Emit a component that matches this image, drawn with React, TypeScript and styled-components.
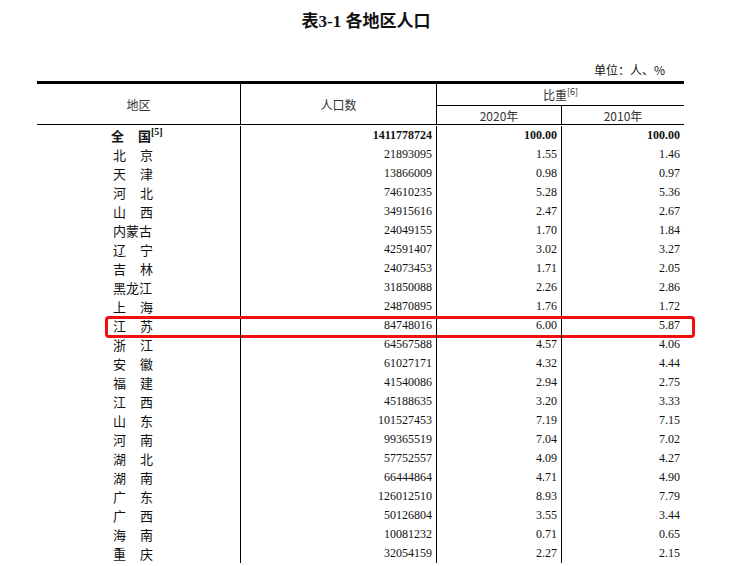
import React from "react";
import styled, { createGlobalStyle } from "styled-components";

const Global = createGlobalStyle`
  body { margin: 0; background: #fff; }
`;

const Page = styled.div`
  width: 732px; height: 566px; overflow: hidden; position: relative;
  font-family: "Liberation Serif", "Noto Sans CJK SC", serif; color: #111;
`;
const Title = styled.div`
  text-align: center; font-weight: bold; font-size: 17px; padding-top: 7px; height: 25px;
  font-family: "Liberation Serif", "Noto Sans CJK SC", serif;
`;
const Unit = styled.div`
  margin-top: 29px; width: 665px; text-align: right; font-size: 12px; height: 20px;
  font-family: "Noto Sans CJK SC", sans-serif;
`;
const Table = styled.div`
  margin-left: 37px; width: 647px; border-top: 3px solid #000;
`;
const cols = "204px 196px 125px 122px";
const Head = styled.div`
  display: grid; grid-template-columns: ${cols}; grid-template-rows: 22px 18px;
  border-bottom: 1px solid #000; font-family: "Noto Sans CJK SC", sans-serif; font-size: 12px; color: #333;
`;
const HCell = styled.div<{ $area: string; $right?: boolean; $bottom?: boolean }>`
  grid-area: ${p => p.$area};
  display: flex; align-items: center; justify-content: center;
  border-right: ${p => (p.$right ? "1px solid #000" : "none")};
  border-bottom: ${p => (p.$bottom ? "1px solid #000" : "none")};
  sup { font-size: 9px; align-self: flex-start; margin-top: 1px; }
`;
const Row = styled.div<{ $hl?: boolean }>`
  display: grid; grid-template-columns: ${cols}; height: 19px; position: relative;
  &::after {
    content: ""; display: ${p => (p.$hl ? "block" : "none")}; position: absolute;
    left: 68px; right: -11px; top: 0; bottom: -3px; border: 3px solid #f01010; border-radius: 4px;
  }
`;
const Name = styled.div<{ $bold?: boolean }>`
  padding-left: ${p => (p.$bold ? 74 : 76)}px; display: flex; align-items: center;
  border-right: 1px solid #000; font-family: "Noto Sans CJK SC", sans-serif; font-size: 13px;
  font-weight: ${p => (p.$bold ? "bold" : "normal")};
  sup { font-family: "Liberation Serif", serif; font-size: 10px; align-self: flex-start; margin-top: 0; }
`;
const Spread = styled.span`
  display: inline-flex; justify-content: space-between; width: 40px;
`;
const Num = styled.div<{ $line?: boolean; $bold?: boolean }>`
  display: flex; align-items: center; justify-content: flex-end; padding-right: 4px;
  border-right: ${p => (p.$line ? "1px solid #000" : "none")};
  font-size: 12px; font-weight: ${p => (p.$bold ? "bold" : "normal")};
`;

const data: [string, string, string, string][] = [
  ["北京", "21893095", "1.55", "1.46"],
  ["天津", "13866009", "0.98", "0.97"],
  ["河北", "74610235", "5.28", "5.36"],
  ["山西", "34915616", "2.47", "2.67"],
  ["内蒙古", "24049155", "1.70", "1.84"],
  ["辽宁", "42591407", "3.02", "3.27"],
  ["吉林", "24073453", "1.71", "2.05"],
  ["黑龙江", "31850088", "2.26", "2.86"],
  ["上海", "24870895", "1.76", "1.72"],
  ["江苏", "84748016", "6.00", "5.87"],
  ["浙江", "64567588", "4.57", "4.06"],
  ["安徽", "61027171", "4.32", "4.44"],
  ["福建", "41540086", "2.94", "2.75"],
  ["江西", "45188635", "3.20", "3.33"],
  ["山东", "101527453", "7.19", "7.15"],
  ["河南", "99365519", "7.04", "7.02"],
  ["湖北", "57752557", "4.09", "4.27"],
  ["湖南", "66444864", "4.71", "4.90"],
  ["广东", "126012510", "8.93", "7.79"],
  ["广西", "50126804", "3.55", "3.44"],
  ["海南", "10081232", "0.71", "0.65"],
  ["重庆", "32054159", "2.27", "2.15"],
];

export default function App() {
  return (
    <Page>
      <Global />
      <Title>表3-1 各地区人口</Title>
      <Unit>单位：人、%</Unit>
      <Table>
        <Head>
          <HCell $area="1 / 1 / 3 / 2" $right>地区</HCell>
          <HCell $area="1 / 2 / 3 / 3" $right>人口数</HCell>
          <HCell $area="1 / 3 / 2 / 5" $bottom>比重<sup>[6]</sup></HCell>
          <HCell $area="2 / 3 / 3 / 4" $right>2020年</HCell>
          <HCell $area="2 / 4 / 3 / 5">2010年</HCell>
        </Head>
        <Row style={{ marginTop: 1 }}>
          <Name $bold><Spread>全<span>国</span></Spread><sup>[5]</sup></Name>
          <Num $line $bold>1411778724</Num>
          <Num $line $bold>100.00</Num>
          <Num $bold>100.00</Num>
        </Row>
        {data.map(([n, a, b, c]) => (
          <Row key={n} $hl={n === "江苏"}>
            <Name>{n.length === 2 ? <Spread><span>{n[0]}</span><span>{n[1]}</span></Spread> : n}</Name>
            <Num $line>{a}</Num>
            <Num $line>{b}</Num>
            <Num>{c}</Num>
          </Row>
        ))}
      </Table>
    </Page>
  );
}
